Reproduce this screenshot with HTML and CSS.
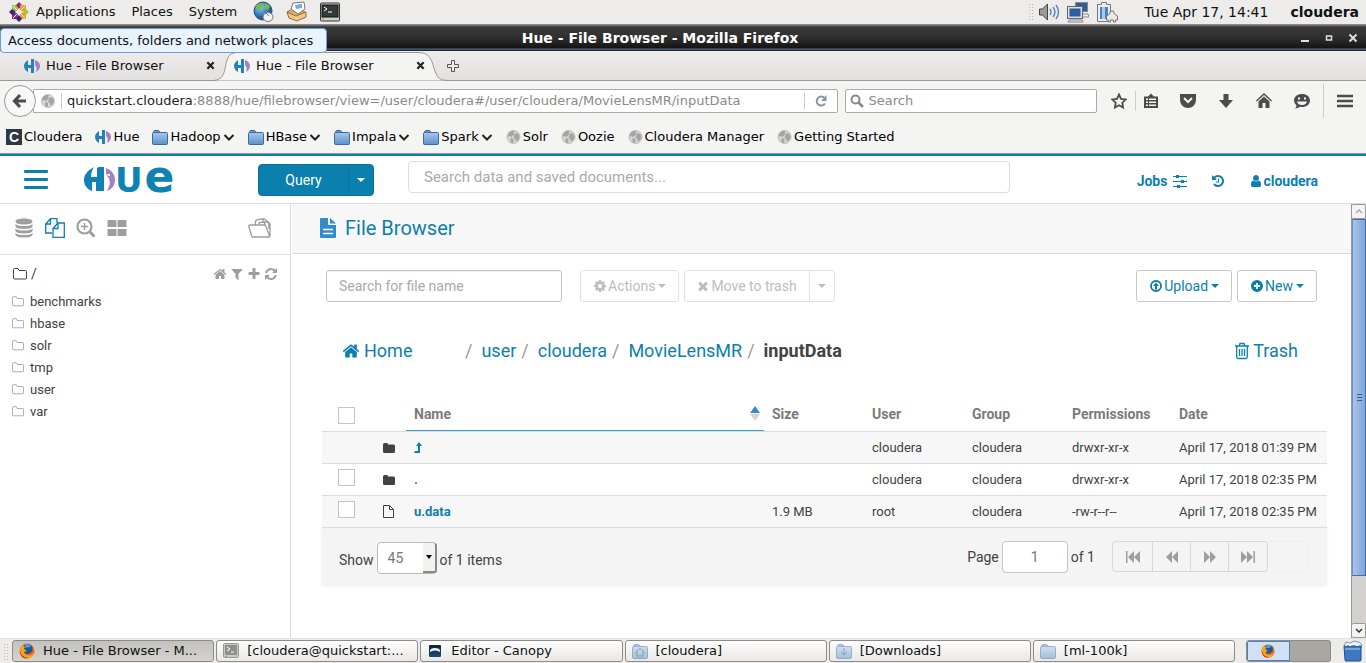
FILE: index.html
```html
<!DOCTYPE html>
<html lang="en">
<head>
<meta charset="utf-8">
<title>Hue - File Browser</title>
<link rel="stylesheet" href="styles.css">
</head>
<body>
<svg class="sprite" aria-hidden="true">
  <defs>
    <linearGradient id="folder-blue" x1="0" y1="0" x2="0" y2="1"><stop offset="0" stop-color="#a9c7ea"/><stop offset="1" stop-color="#5f90c9"/></linearGradient>
    <radialGradient id="globe-blue" cx=".35" cy=".3" r=".8"><stop offset="0" stop-color="#8fd0f0"/><stop offset=".6" stop-color="#2a6fb5"/><stop offset="1" stop-color="#153a70"/></radialGradient>
    <linearGradient id="canopy-blue" x1="0" y1="0" x2="0" y2="1"><stop offset="0" stop-color="#0d2038"/><stop offset="1" stop-color="#1e4a78"/></linearGradient>
  </defs>
  <symbol id="home" viewBox="0 0 1792 1792"><path d="M1472 992v480q0 26-19 45t-45 19h-384v-384h-256v384h-384q-26 0-45-19t-19-45v-480q0-1 .5-3t.5-3l575-474 575 474q1 2 1 6zm223-69l-62 74q-8 9-21 11h-3q-13 0-21-7l-692-577-692 577q-12 8-24 7-13-2-21-11l-62-74q-8-10-7-23.5t11-21.5l719-599q32-26 76-26t76 26l244 204v-195q0-14 9-23t23-9h192q14 0 23 9t9 23v408l219 182q10 8 11 21.5t-7 23.5z"/></symbol>
  <symbol id="user" viewBox="0 0 1792 1792"><path d="M1536 1399q0 109-62.5 187t-150.5 78h-854q-88 0-150.5-78t-62.5-187q0-85 8.5-160.5t31.5-152 58.5-131 94-89 134.5-34.5q131 128 313 128t313-128q76 0 134.5 34.5t94 89 58.5 131 31.5 152 8.5 160.5zm-256-887q0 159-112.5 271.5t-271.5 112.5-271.5-112.5-112.5-271.5 112.5-271.5 271.5-112.5 271.5 112.5 112.5 271.5z"/></symbol>
  <symbol id="filter" viewBox="0 0 1792 1792"><path d="M1595 295q17 41-14 70l-493 493v742q0 42-39 59-13 5-25 5-27 0-45-19l-256-256q-19-19-19-45v-486l-493-493q-31-29-14-70 17-39 59-39h1280q42 0 59 39z"/></symbol>
  <symbol id="plus" viewBox="0 0 1792 1792"><path d="M1600 736v192q0 40-28 68t-68 28h-416v416q0 40-28 68t-68 28h-192q-40 0-68-28t-28-68v-416h-416q-40 0-68-28t-28-68v-192q0-40 28-68t68-28h416v-416q0-40 28-68t68-28h192q40 0 68 28t28 68v416h416q40 0 68 28t28 68z"/></symbol>
  <symbol id="refresh" viewBox="0 0 1792 1792"><path d="M1639 1056q0 5-1 7-64 268-268 434.5t-478 166.5q-146 0-282.5-55t-243.5-157l-129 129q-19 19-45 19t-45-19-19-45v-448q0-26 19-45t45-19h448q26 0 45 19t19 45-19 45l-137 137q71 66 161 102t187 36q134 0 250-65t186-179q11-17 53-117 8-23 30-23h192q13 0 22.5 9.5t9.5 22.5zm25-800v448q0 26-19 45t-45 19h-448q-26 0-45-19t-19-45 19-45l138-138q-148-137-349-137-134 0-250 65t-186 179q-11 17-53 117-8 23-30 23h-199q-13 0-22.5-9.5t-9.5-22.5v-7q65-268 270-434.5t480-166.5q146 0 284 55.5t245 156.5l130-129q19-19 45-19t45 19 19 45z"/></symbol>
  <symbol id="cog" viewBox="0 0 1792 1792"><path d="M1152 896q0-106-75-181t-181-75-181 75-75 181 75 181 181 75 181-75 75-181zm512-109v222q0 12-8 23t-20 13l-185 28q-19 54-39 91 35 50 107 138 10 12 10 25t-9 23q-27 37-99 108t-94 71q-12 0-26-9l-138-108q-44 23-91 38-16 136-29 186-7 28-36 28h-222q-14 0-24.5-8.5t-11.5-21.5l-28-184q-49-16-90-37l-141 107q-10 9-25 9-14 0-25-11-126-114-165-168-7-10-7-23 0-12 8-23 15-21 51-66.5t54-70.5q-27-50-41-99l-183-27q-13-2-21-12.5t-8-23.5v-222q0-12 8-23t19-13l186-28q14-46 39-92-40-57-107-138-10-12-10-24 0-10 9-23 26-36 98.5-107.5t94.5-71.5q13 0 26 10l138 107q44-23 91-38 16-136 29-186 7-28 36-28h222q14 0 24.5 8.5t11.5 21.5l28 184q49 16 90 37l142-107q9-9 24-9 13 0 25 10 129 119 165 170 7 8 7 22 0 12-8 23-15 21-51 66.5t-54 70.5q26 50 41 98l183 28q13 2 21 12.5t8 23.5z"/></symbol>
  <symbol id="times" viewBox="0 0 1792 1792"><path d="M1490 1322q0 40-28 68l-136 136q-28 28-68 28t-68-28l-294-294-294 294q-28 28-68 28t-68-28l-136-136q-28-28-28-68t28-68l294-294-294-294q-28-28-28-68t28-68l136-136q28-28 68-28t68 28l294 294 294-294q28-28 68-28t68 28l136 136q28 28 28 68t-28 68l-294 294 294 294q28 28 28 68z"/></symbol>
  <symbol id="history" viewBox="0 0 1792 1792"><path d="M1664 896q0 156-61 298t-164 245-245 164-298 61q-172 0-327-72.5t-264-204.5q-7-10-6.5-22.5t8.5-20.5l137-138q10-9 25-9 16 2 23 12 73 95 179 147t225 52q104 0 198.5-40.5t163.5-109.5 109.5-163.5 40.5-198.5-40.5-198.5-109.5-163.5-163.5-109.5-198.5-40.5q-98 0-188 35.5t-160 101.5l137 138q31 30 14 69-17 40-59 40h-448q-26 0-45-19t-19-45v-448q0-42 40-59 39-17 69 14l130 129q107-101 244.5-156.5t284.5-55.5q156 0 298 61t245 164 164 245 61 298zm-640-288v448q0 14-9 23t-23 9h-320q-14 0-23-9t-9-23v-64q0-14 9-23t23-9h224v-352q0-14 9-23t23-9h64q14 0 23 9t9 23z"/></symbol>
  <symbol id="caret" viewBox="0 0 8 4"><path d="M0 0H8L4 4Z"/></symbol>
  <symbol id="hue" viewBox="0 0 31 25"><path fill="#0f81b3" d="M10 0C3 4 0 8 0 13c0 5 3 9 8 11V15h4v9h8V0h-5l-2 1v9H7C7 6 8 3 10 0Z"/><path fill="#a580c4" d="M22 1c6 2 9 7 9 12s-3 9-8 11c3-6 4-9 1-14-2-2-2-4-2-9Z"/><path fill="#fff" d="M23 7h3v2h-2z"/></symbol>
  <symbol id="hue-fav" viewBox="0 0 16 14"><path fill="#2580bf" d="M4 1C1 3 0 5 0 7c0 3 2 5 4 6V9h3v5h3V0H7v6H4Z"/><path fill="#a580c4" d="M11 1c3 1 5 3 5 6s-2 5-4 6c1-3 1-5-1-7Z"/></symbol>
  <symbol id="globe" viewBox="0 0 14 14"><circle cx="7" cy="7" r="6.500" fill="#d6d6d6" stroke="#bdbdbd"/><path fill="#a4a4a4" d="M2 3l3-2 3 0-1 2 1 1-3 3-2-1-2 1zM9 3l3 1 1 4-2 3-2 0 0-2-2-1 1-3zM4 8l3 1 0 3-1 1-2-1z"/></symbol>
  <symbol id="folder" viewBox="0 0 16 16"><path fill="#6b98cf" stroke="#3866a0" d="M1.500 3V2.500l1-1h4l1 1V4H1.500z"/><rect x=".5" y="3.500" width="15" height="12" rx="1" fill="url(#folder-blue)" stroke="#3b6aa5"/></symbol>
  <symbol id="chev" viewBox="0 0 12 7"><path d="M1.500 1L6 5.500 10.500 1" fill="none" stroke="#222" stroke-width="2"/></symbol>
  <symbol id="folder-line" viewBox="0 0 14 12"><path fill="none" stroke="currentColor" d="M.5 10V1.500a1 1 0 0 1 1-1H5l1 2h6.500a1 1 0 0 1 1 1V10a1 1 0 0 1-1 1h-11a1 1 0 0 1-1-1z"/></symbol>
  <symbol id="folder-solid" viewBox="0 0 12 10"><path d="M0 8.500v-7Q0 0 1.500 0H4q1 0 1 1.500h5.500Q12 1.500 12 3v5.500Q12 10 10.500 10h-9Q0 10 0 8.500z"/></symbol>
  <symbol id="firefox" viewBox="0 0 16 16"><circle cx="8" cy="8" r="7.500" fill="#e8671b"/><circle cx="8.500" cy="6" r="5" fill="#23539b"/><path fill="#48a0d8" d="M6 1.500q4-2 6 2l-3 1-3 0z"/><path fill="#f7a51c" d="M1 4q-1 10 7 11.500 6 0 7.500-7-2 4-6 4Q5 12 5 9l3-1-3-2 1-2-3-2z"/><path fill="#cf3a16" d="M1 6q0 8 8 9-6 2-8-5z"/></symbol>
</svg>

<header class="panel">
  <nav class="panel-menu">
    <svg class="i22" viewBox="0 0 22 22"><path fill="#a4c93b" d="M4 4h6v6H4z"/><path fill="#9b2574" d="M11 1l3 3-3 4-3-4z"/><path fill="#ed9f2d" d="M12 4h6v6h-6z"/><path fill="#9b2574" d="M4 12h6v6H4z"/><path fill="#2c2a7c" d="M1 11l3-3 4 3-4 3z"/><path fill="#a4c93b" d="M18 8l3 3-3 3-4-3z"/><path fill="#ed9f2d" d="M12 12h6v6h-6z"/><path fill="#2c2a7c" d="M11 14l3 4-3 3-3-3z"/><path stroke="#edecea" d="M5 5l12 12M17 5L5 17"/></svg>
    <button>Applications</button><button>Places</button><button>System</button>
    <svg class="i22" viewBox="0 0 22 22"><circle cx="10" cy="10" r="9" fill="url(#globe-blue)" stroke="#284e7d"/><path fill="#78bb42" d="M3 5q4-4 7-2l-2 5-3 2zM12 2l5 3-2 4-4-2z"/><ellipse cx="15" cy="16" rx="5" ry="4.500" fill="#f2f2f0" stroke="#777"/><path stroke="#777" d="M13 12l3 3"/></svg>
    <svg class="i22 mail" viewBox="0 0 22 22"><path fill="#e0ad69" stroke="#9b6b2e" d="M1 11L10 6l9 5-9 8z"/><path fill="#fff" stroke="#777" d="M7 2l11-1 1 7-7 5-7-5z"/><path fill="#75acd4" d="M9 4l7-1 0 4-6 1z"/><path fill="#efc88e" stroke="#9b6b2e" d="M1 11l9 4 10-4 0 5-9 4-8-3z"/></svg>
    <svg class="i22 term" viewBox="0 0 22 22"><rect x="1.500" y="2" width="19" height="18" rx="1" fill="#d0d0ca" stroke="#333"/><rect x="3" y="4" width="16" height="12" fill="#333a39" stroke="#111"/><path d="M5 6l3 2-3 2M9 11h4" fill="none" stroke="#fff"/><path stroke="#73d216" d="M3 17.500h2"/></svg>
  </nav>
  <div class="panel-status">
    <span class="grip"></span>
    <svg class="i22" viewBox="0 0 22 22"><path fill="#9a9c97" stroke="#444" d="M1.500 8h3l5-5v16l-5-5h-3z"/><path fill="none" stroke="#5584c4" stroke-width="1.400" d="M12 8q2 3 0 6M15 6q4 5 0 10M18 4q5 7 0 14"/></svg>
    <svg class="i22 net" viewBox="0 0 22 22"><rect x="8.500" y="1.500" width="12" height="9" fill="#2e5d9e" stroke="#888"/><path fill="#eee" stroke="#888" d="M14 13h7l1 3h-7z"/><rect x="1.500" y="6.500" width="13" height="10" fill="#2e5d9e" stroke="#ddd" stroke-width="2"/><rect x=".5" y="5.500" width="15" height="12" fill="none" stroke="#666"/><path fill="#eee" stroke="#888" d="M2 19h13l1 2H1z"/></svg>
    <svg class="i22" viewBox="0 0 22 22"><path fill="#eee" stroke="#777" d="M1.500 3.500h4v-2h5v2h4v17h-13z"/><path fill="#4a7fc0" d="M4 6h8v12H4z"/><path fill="#a9c8eb" d="M6 6h3v12H6z"/><path fill="#e8e8e6" stroke="#777" d="M10.500 15l3-2 1-3h3l1 3 3 2v4h-2v2h-2v-2h-3v2h-2v-2h-2z"/></svg>
    <time>Tue Apr 17, 14:41</time><b>cloudera</b>
  </div>
</header>
<div class="tip" role="tooltip">Access documents, folders and network places</div>

<div class="titlebar">
  <h1>Hue - File Browser - Mozilla Firefox</h1>
  <div class="winbtns">
    <button aria-label="Minimize"><svg viewBox="0 0 10 10"><path d="M1 8h8" stroke-width="2"/></svg></button>
    <button aria-label="Maximize"><svg viewBox="0 0 10 10"><path d="M2.500 3h5v4h-5z" stroke-width="1.500"/></svg></button>
    <button aria-label="Close"><svg viewBox="0 0 10 10"><path d="M1.500 1.500l7 7m0-7l-7 7" stroke-width="2"/></svg></button>
  </div>
</div>

<div class="tabs">
  <div class="tab"><svg class="fav"><use href="#hue-fav"/></svg><span>Hue - File Browser</span><button aria-label="Close tab"><svg viewBox="0 0 10 10"><path d="M1.500 1.500l7 7m0-7l-7 7"/></svg></button></div>
  <div class="tab active"><svg class="tabshape" viewBox="0 0 234 30" preserveAspectRatio="none"><path fill="#f4f4f2" stroke="#999" d="M0 29.500Q9 29 11 18C13 7 14 1.500 24 1.500H204C215 1.500 217 7 220 17C223 27 225 29 234 29.500"/></svg><svg class="fav"><use href="#hue-fav"/></svg><span>Hue - File Browser</span><button aria-label="Close tab"><svg viewBox="0 0 10 10"><path d="M1.500 1.500l7 7m0-7l-7 7"/></svg></button></div>
  <button class="newtab" aria-label="New tab"><svg viewBox="0 0 14 14"><path d="M5.500 1.500h3v4h4v3h-4v4h-3v-4h-4v-3h4z"/></svg></button>
</div>

<div class="navbar">
  <button class="back" aria-label="Back"><svg viewBox="0 0 16 16"><path d="M14 8H4M8 2L2.500 8 8 14" fill="none" stroke="#4c4c4c" stroke-width="3.200"/></svg></button>
  <div class="urlbar">
    <svg class="i14"><use href="#globe"/></svg>
    <div class="url" role="textbox" aria-label="Address">quickstart.cloudera<span>:8888/hue/filebrowser/view=/user/cloudera#/user/cloudera/MovieLensMR/inputData</span></div>
    <button aria-label="Reload"><svg class="i14" viewBox="0 0 14 14"><path d="M11 9.500A4.500 4.500 0 1 1 10.500 4" fill="none" stroke="#8496a6" stroke-width="2"/><path fill="#8496a6" d="M12.500 1v6H7z"/></svg></button>
  </div>
  <label class="find"><svg class="i14" viewBox="0 0 14 14"><circle cx="5.500" cy="5.500" r="4" fill="none" stroke="#888" stroke-width="2"/><path stroke="#888" stroke-width="2.500" d="M8.500 8.500l4.500 4.500"/></svg><input type="text" placeholder="Search" aria-label="Web search"></label>
  <div class="tools">
    <button aria-label="Bookmark"><svg viewBox="0 0 16 16"><path fill="none" stroke="#4c4c4c" stroke-width="1.800" d="M8 1.500l2 4.300 4.700.6-3.400 3.300.8 4.800L8 12.200l-4.100 2.300.8-4.800L1.300 6.400 6 5.800z"/></svg></button>
    <button class="split" aria-label="Bookmarks list"><svg viewBox="0 0 16 16"><path fill="#4c4c4c" d="M1 3.500h4L8 .5l3 3h4V15H1z"/><path fill="#f4f4f2" d="M3 5.500h2V7H3zM6 5.500h7V7H6zM3 8.500h2V10H3zM6 8.500h7V10H6zM3 11.500h2V13H3zM6 11.500h7V13H6z"/></svg></button>
    <button aria-label="Pocket"><svg viewBox="0 0 16 16"><path fill="#4c4c4c" d="M0 1h16v6a8 8 0 0 1-16 0z"/><path fill="none" stroke="#f4f4f4" stroke-width="2" d="M4 5l4 4 4-4"/></svg></button>
    <button aria-label="Downloads"><svg viewBox="0 0 16 16"><path fill="#4c4c4c" d="M5.500 1h5v6H15l-7 8-7-8h4.500z"/></svg></button>
    <button aria-label="Home"><svg viewBox="0 0 16 16"><path fill="#4c4c4c" d="M8 0l8 7.500-1 1-7-6.500-7 6.500-1-1zM8 3.500l5.500 5V15H9.500v-5h-3v5h-4V8.500z"/></svg></button>
    <button aria-label="Chat"><svg viewBox="0 0 16 16"><path fill="#4c4c4c" d="M8 1c4.500 0 8 2.700 8 6.500S12.500 14 8 14q-1 0-2-.3Q4 15.500 1 15.500q1.500-1.500 1.500-3Q0 10.500 0 7.500C0 3.700 3.500 1 8 1z"/><path fill="#f4f4f4" d="M4 4.500h2v2H4zM10 4.500h2v2h-2zM3 8.500h10q-1 3.500-5 3.500T3 8.500z"/></svg></button>
    <button class="menu" aria-label="Menu"><svg viewBox="0 0 16 16"><path stroke="#4c4c4c" stroke-width="2.400" d="M0 3h16M0 8h16M0 13h16"/></svg></button>
  </div>
</div>

<nav class="bookmarks">
  <a href="#"><i class="cicon">C</i>Cloudera</a>
  <a href="#"><svg class="i16"><use href="#hue-fav"/></svg>Hue</a>
  <a href="#"><svg class="i16"><use href="#folder"/></svg>Hadoop<svg class="chev"><use href="#chev"/></svg></a>
  <a href="#"><svg class="i16"><use href="#folder"/></svg>HBase<svg class="chev"><use href="#chev"/></svg></a>
  <a href="#"><svg class="i16"><use href="#folder"/></svg>Impala<svg class="chev"><use href="#chev"/></svg></a>
  <a href="#"><svg class="i16"><use href="#folder"/></svg>Spark<svg class="chev"><use href="#chev"/></svg></a>
  <a href="#"><svg class="site"><use href="#globe"/></svg>Solr</a>
  <a href="#"><svg class="site"><use href="#globe"/></svg>Oozie</a>
  <a href="#"><svg class="site"><use href="#globe"/></svg>Cloudera Manager</a>
  <a href="#"><svg class="site"><use href="#globe"/></svg>Getting Started</a>
</nav>

<div class="topnav">
  <button class="burger" aria-label="Menu"><span></span><span></span><span></span></button>
  <a class="logo" href="#" aria-label="Hue"><svg class="mark"><use href="#hue"/></svg><span class="u">U</span><span class="e">e</span></a>
  <div class="query"><button>Query</button><button aria-label="Query types"><svg class="caret"><use href="#caret"/></svg></button></div>
  <input class="search" type="text" placeholder="Search data and saved documents..." aria-label="Search data and saved documents">
  <nav class="usernav">
    <a href="#">Jobs <svg class="i14 sliders" viewBox="0 0 14 14"><path stroke="currentColor" d="M0 2.500h14M0 7.500h14M0 12.500h14"/><path d="M3 1h3v3H3zM8 6h3v3H8zM4 11h3v3H4z"/></svg></a>
    <a href="#" aria-label="History"><svg class="i14"><use href="#history"/></svg></a>
    <a href="#"><svg class="i14"><use href="#user"/></svg>cloudera</a>
  </nav>
</div>

<div class="app">
  <aside>
    <div class="assist">
      <button aria-label="Databases"><svg class="i20" viewBox="0 0 20 20"><path d="M1.500 3.500C1.500 1.500 5 .5 10 .5s8.500 1 8.500 3S15 6.500 10 6.500 1.500 5.500 1.500 3.500zM1.500 6q2 2 8.500 2t8.500-2v2.500q-1 2.500-8.500 2.500T1.500 8.500zM1.500 10.500q2 2 8.500 2t8.500-2V13q-1 2.500-8.500 2.500T1.500 13zM1.500 15q2 2 8.500 2t8.500-2v2q-1 2.500-8.500 2.500T1.500 17z"/></svg></button>
      <button class="on" aria-label="Files"><svg class="i20" viewBox="0 0 20 20"><path fill="none" stroke="currentColor" stroke-width="1.300" d="M7 15H.7V6L5.500.7H12V5M5.500.7V6H.7M8.500 19.300h10.800V5H13L8 10.500v8.800zM13 5v5.500H8"/></svg></button>
      <button aria-label="Documents"><svg class="i20" viewBox="0 0 20 20"><circle cx="8.500" cy="8.500" r="7" fill="none" stroke="currentColor" stroke-width="2.200"/><path stroke="currentColor" stroke-width="3" d="M13.500 13.500l5 5"/><path stroke="currentColor" stroke-width="1.600" d="M8.500 5v7M5 8.500h7"/></svg></button>
      <button aria-label="Dashboards"><svg class="i20" viewBox="0 0 20 20"><path d="M1.500 2h7q1 0 1 1v6h-9V3q0-1 1-1zM11.500 2h7q1 0 1 1v6h-9V3q0-1 1-1zM.5 11h9v7h-8q-1 0-1-1zM10.500 11h9v6q0 1-1 1h-8z"/></svg></button>
      <button class="open" aria-label="Collapse documents"><svg viewBox="0 0 23 20"><path fill="none" stroke="currentColor" stroke-width="1.300" d="M4 19L.8 8.500Q.5 7 2 7h4.500M4 19h17q1 0 1-1V6q0-1-1.500-1M2 7h14.500q1 0 1.500 1.500L21.500 18M7 7l1-5 8-1.300L20.500 4l.5 7M11 7V4.500l5-.5 2 4.500M15 1l.5 3h5"/></svg></button>
    </div>
    <div class="crumb"><svg class="f1"><use href="#folder-line"/></svg><span>/</span>
      <div class="acts"><button aria-label="Home"><svg class="i14"><use href="#home"/></svg></button><button aria-label="Filter"><svg class="i14"><use href="#filter"/></svg></button><button aria-label="Add"><svg class="i14"><use href="#plus"/></svg></button><button aria-label="Refresh"><svg class="i14"><use href="#refresh"/></svg></button></div>
    </div>
    <ul class="tree">
      <li><a href="#"><svg><use href="#folder-line"/></svg>benchmarks</a></li>
      <li><a href="#"><svg><use href="#folder-line"/></svg>hbase</a></li>
      <li><a href="#"><svg><use href="#folder-line"/></svg>solr</a></li>
      <li><a href="#"><svg><use href="#folder-line"/></svg>tmp</a></li>
      <li><a href="#"><svg><use href="#folder-line"/></svg>user</a></li>
      <li><a href="#"><svg><use href="#folder-line"/></svg>var</a></li>
    </ul>
  </aside>

  <main>
    <h2><svg viewBox="0 0 16 20"><path fill="#338bc7" d="M0 1q0-1 1-1h7v6q0 1 1 1h7v12q0 1-1 1H1q-1 0-1-1zM10 0l6 5.500h-6z"/><path stroke="#fff" stroke-width="1.400" d="M3 11.500h10M3 15.500h10"/></svg>File Browser</h2>
    <div class="content">
      <div class="filters">
        <input type="text" placeholder="Search for file name" aria-label="Search for file name">
        <button class="btn" disabled><svg class="i14"><use href="#cog"/></svg>Actions<svg class="caret"><use href="#caret"/></svg></button>
        <div class="group"><button class="btn" disabled><svg class="i14"><use href="#times"/></svg>Move to trash</button><button class="btn" disabled aria-label="More"><svg class="caret"><use href="#caret"/></svg></button></div>
        <div class="right">
          <button class="btn"><svg class="i14" viewBox="0 0 14 14"><circle cx="7" cy="7" r="5" fill="none" stroke="currentColor" stroke-width="1.800"/><path d="M7 3.500L10 7H8v3.500H6V7H4z"/></svg>Upload<svg class="caret"><use href="#caret"/></svg></button>
          <button class="btn"><svg class="i14" viewBox="0 0 14 14"><path fill-rule="evenodd" d="M7 1a6 6 0 1 1 0 12A6 6 0 0 1 7 1zM6 4v2H4v2h2v2h2V8h2V6H8V4z"/></svg>New<svg class="caret"><use href="#caret"/></svg></button>
        </div>
      </div>
      <div class="path">
        <a class="homelink" href="#"><svg><use href="#home"/></svg>Home</a>
        <ol><li><a href="#">user</a></li><li><a href="#">cloudera</a></li><li><a href="#">MovieLensMR</a></li><li><b>inputData</b></li></ol>
        <a class="trash" href="#"><svg viewBox="0 0 16 18"><path fill="none" stroke="currentColor" stroke-width="1.300" d="M1 4h14M5 4l1-2.500h4L11 4M2.700 4v11q0 1.500 1.500 1.500h7.600q1.500 0 1.500-1.500V4M5.500 7v7M8 7v7M10.500 7v7"/></svg>Trash</a>
      </div>
      <table>
        <colgroup><col class="c-check"><col class="c-icon"><col><col class="c-size"><col class="c-size"><col class="c-size"><col class="c-perm"><col class="c-date"></colgroup>
        <thead><tr><th><input type="checkbox" aria-label="Select all"></th><th></th><th class="sorted"><div>Name<svg viewBox="0 0 10 16"><path fill="#338bc7" d="M5 0l5 7H0z"/><path fill="#d4d4d4" d="M0 8h10l-5 7z"/></svg></div></th><th>Size</th><th>User</th><th>Group</th><th>Permissions</th><th>Date</th></tr></thead>
        <tbody>
          <tr><td></td><td><svg class="fs"><use href="#folder-solid"/></svg></td><td><a href="#" aria-label="Parent folder"><svg class="up" viewBox="0 0 8 11"><path d="M5 0l3 4H6v7H0l1-2h3V4H2z"/></svg></a></td><td></td><td>cloudera</td><td>cloudera</td><td>drwxr-xr-x</td><td>April 17, 2018 01:39 PM</td></tr>
          <tr><td><input type="checkbox" aria-label="Select current folder"></td><td><svg class="fs"><use href="#folder-solid"/></svg></td><td><a href="#">.</a></td><td></td><td>cloudera</td><td>cloudera</td><td>drwxr-xr-x</td><td>April 17, 2018 02:35 PM</td></tr>
          <tr><td><input type="checkbox" aria-label="Select u.data"></td><td><svg class="fo" viewBox="0 0 11 13"><path fill="none" stroke="currentColor" d="M.5.500h6l4 4v8H.5zM6.500.500v4h4"/></svg></td><td><a href="#">u.data</a></td><td>1.9 MB</td><td>root</td><td>cloudera</td><td>-rw-r--r--</td><td>April 17, 2018 02:35 PM</td></tr>
        </tbody>
      </table>
      <div class="pager">
        <label for="per">Show</label>
        <span class="selbox"><select id="per"><option>45</option></select><span class="selarrow"><svg viewBox="0 0 6 4"><path d="M0 0h6L3 4z"/></svg></span></span>
        <span>of 1 items</span>
        <div class="pages">
          <label for="pg">Page</label><input id="pg" type="text" value="1"><span>of 1</span>
          <div class="pagebtns">
            <button aria-label="First page"><svg viewBox="0 0 16 12"><path d="M1 0h1.500v12H1zM9 0v12L3 6zM15 0v12L9 6z"/></svg></button>
            <button aria-label="Previous page"><svg viewBox="0 0 16 12"><path d="M8 0v12L2 6zM14 0v12L8 6z"/></svg></button>
            <button aria-label="Next page"><svg viewBox="0 0 16 12"><path d="M2 0v12l6-6zM8 0v12l6-6z"/></svg></button>
            <button aria-label="Last page"><svg viewBox="0 0 16 12"><path d="M1 0v12l6-6zM7 0v12l6-6zM13.500 0H15v12h-1.500z"/></svg></button>
          </div>
        </div>
      </div>
    </div>
  </main>
  <div class="scroll">
    <button aria-label="Scroll up"><svg viewBox="0 0 8 5"><path d="M1 4l3-3 3 3" stroke="#aaa"/></svg></button>
    <div class="thumb"><span></span></div>
    <div class="trough"></div>
    <button aria-label="Scroll down"><svg viewBox="0 0 8 5"><path d="M1 1l3 3 3-3" stroke="#333"/></svg></button>
  </div>
</div>

<footer class="taskbar">
  <span class="grip"></span>
  <div class="tasks">
    <button class="cur"><svg class="i16"><use href="#firefox"/></svg><span>Hue - File Browser - M...</span></button>
    <button><svg class="i16" viewBox="0 0 16 16"><rect x=".5" y=".5" width="15" height="14" rx="1" fill="#c9c9c6" stroke="#999"/><rect x="2" y="2" width="12" height="10" fill="#8d918f"/><path d="M4 4l3 2-3 2M8 9h3" fill="none" stroke="#fff"/><path stroke="#73d216" d="M2 13.500h2"/></svg><span>[cloudera@quickstart:...</span></button>
    <button><svg class="i16" viewBox="0 0 16 16"><rect x="2" y="2" width="12" height="12" rx="1" fill="url(#canopy-blue)"/><path fill="#eef3f7" d="M3 8q0-3 5-3t5 3v1q-2-1.500-5-1.500T3 9z"/></svg><span>Editor - Canopy</span></button>
    <button><span class="pale"><svg class="i16"><use href="#folder"/></svg><svg class="over" viewBox="0 0 16 16"><path d="M3 9.500L8 5.500l5 4M5 9v4h6V9"/></svg></span><span>[cloudera]</span></button>
    <button><span class="pale"><svg class="i16"><use href="#folder"/></svg><svg class="over" viewBox="0 0 16 16"><path d="M8 5v7M5 9l3 3 3-3"/></svg></span><span>[Downloads]</span></button>
    <button><span class="pale"><svg class="i16"><use href="#folder"/></svg></span><span>[ml-100k]</span></button>
  </div>
  <div class="spaces"><button aria-label="Workspace 1"><svg class="i14"><use href="#firefox"/></svg></button><button aria-label="Workspace 2"></button></div>
  <svg class="bin" viewBox="0 0 22 22"><path fill="#e8eff5" stroke="#8a98a5" d="M2 6l2-4 4 1 4-2 5 1 3 3-1 3z"/><path fill="#3f78c0" stroke="#1f4d8c" d="M2 6h17v14q0 1-1 1H4q-1 0-1-1z"/><path fill="#76a6de" d="M3 8h15v2H3z"/><path fill="none" stroke="#fff" d="M3 6l3-2 2 2 4-3 3 3 3-2"/></svg>
</footer>
</body>
</html>
```

FILE: styles.css
```css
* { box-sizing: border-box; }
body { margin: 0; min-height: 100vh; display: flex; flex-direction: column; background: #fff; font: 13px/16px "DejaVu Sans", sans-serif; color: #111; position: relative; }
button { font: inherit; color: inherit; background: none; border: 0; padding: 0; margin: 0; display: flex; align-items: center; justify-content: center; }
a { color: inherit; text-decoration: none; }
svg { display: block; flex: none; fill: currentColor; }
h1, h2, ul, ol { margin: 0; padding: 0; list-style: none; }
.sprite { position: absolute; width: 0; height: 0; }
.i22 { width: 22px; height: 22px; }
.i20 { width: 20px; height: 20px; }
.i16 { width: 16px; height: 16px; }
.i14 { width: 14px; height: 14px; }
.caret { width: 8px; height: 4px; }
.grip { width: 5px; height: 17px; background: radial-gradient(circle, #999 0 1px, transparent 1px) 0 0 / 3px 3px; opacity: .6; }

.panel { height: 25px; display: flex; justify-content: space-between; background: #edecea; border-bottom: 1px solid #8f8e8a; }
.panel-menu, .panel-status { display: flex; align-items: center; padding-bottom: 1px; }
.panel-menu { padding-left: 8px; }
.panel-menu button { margin-right: 16px; }
.panel-menu .i22:first-child { margin-right: 6px; }
.panel-menu .mail, .panel-menu .term { margin-left: 11px; }
.panel-status { padding-right: 7px; font-size: 14px; }
.panel-status .grip { margin-right: 5px; }
.panel-status .net { margin: 0 7px; }
.panel-status time { margin-left: 26px; }
.panel-status b { margin-left: 22px; }
.tip { position: absolute; z-index: 2; left: 0; top: 28px; height: 25px; min-width: 327px; padding: 0 7px; border: 1px solid #6f9bd6; border-radius: 4px; background: #e8f3fe; line-height: 23px; }

.titlebar { height: 26px; display: flex; align-items: center; background: linear-gradient(#777 0, #3a3a3a 2px, #303030 12px, #151515 23px, #536b8b 24px, #111 26px); color: #fff; padding: 0 8px 0 20px; }
.titlebar h1 { flex: 1; text-align: center; font-size: 14px; line-height: 16px; }
.winbtns { display: flex; gap: 14px; }
.winbtns svg { width: 10px; height: 10px; fill: none; stroke: #ddd; }

.tabs { height: 30px; display: flex; align-items: center; padding-left: 14px; background: linear-gradient(#edecea, #e2e1df); border-bottom: 1px solid #999; }
.tab { position: relative; display: flex; align-items: center; width: 210px; height: 30px; padding: 0 9px 0 10px; gap: 6px; }
.tab > * { position: relative; }
.tab span { flex: 1; }
.tab button svg { width: 9px; height: 9px; stroke: #222; stroke-width: 2.400; }
.fav { width: 16px; height: 14px; }
.tab .tabshape { position: absolute; left: -10px; top: 0; width: 234px; height: 30px; }
.newtab { margin-left: 12px; position: relative; }
.newtab svg { width: 14px; height: 14px; fill: #eee; stroke: #555; }

.navbar { height: 40px; display: flex; align-items: center; background: #f4f4f2; padding-left: 4px; }
.back { width: 32px; height: 32px; border: 1px solid #999; border-radius: 50%; background: #f8f8f8; position: relative; }
.back svg { width: 16px; height: 16px; }
.urlbar { flex: 807; height: 24px; margin-left: -3px; display: flex; align-items: center; background: #fff; border: 1px solid #aaa; border-radius: 0 2px 2px 0; padding-left: 7px; }
.url { flex: 1; margin-left: 6px; padding-left: 5px; border-left: 1px solid #ccc; white-space: nowrap; overflow: hidden; color: #222; }
.url span { color: #8a8a8a; }
.urlbar button { height: 16px; width: 33px; border-left: 1px solid #ccc; }
.find { flex: 250; height: 24px; margin-left: 7px; display: flex; align-items: center; gap: 5px; padding-left: 4px; background: #fff; border: 1px solid #aaa; border-radius: 2px; }
.find input { flex: 1; min-width: 0; border: 0; padding: 0; background: none; font: inherit; outline: 0; }
.find input::placeholder { color: #8a8a8a; }
.tools { display: flex; align-items: center; padding: 0 12px 0 14px; }
.tools button { width: 38px; height: 20px; }
.tools button:first-child { width: 24px; padding-right: 8px; }
.tools svg { width: 16px; height: 16px; }
.tools .split { width: 34px; border-left: 1px solid #ccc; padding-right: 4px; }
.tools .menu { height: 34px; width: 31px; margin-left: 2px; border-left: 1px solid #ccc; padding-left: 12px; }

.bookmarks { height: 33px; display: flex; align-items: center; padding: 0 6px; gap: 13px; background: #f4f4f2; border-bottom: 1px solid #999; }
.bookmarks a { display: flex; align-items: center; gap: 2px; color: #000; white-space: nowrap; }
.chev { width: 12px; height: 7px; }
.site { width: 15px; height: 14px; }
.cicon { width: 16px; height: 16px; background: #2d3841; color: #fff; font: bold 14px/16px "Liberation Sans", sans-serif; text-align: center; }

.topnav { height: 50px; display: flex; align-items: center; background: #fff; border-top: 2px solid #0b7fad; border-bottom: 1px solid #dcdcdc; font: 14px/20px Roboto, sans-serif; padding: 0 48px 0 24px; }
.burger { width: 24px; flex-direction: column; gap: 5px; }
.burger span { width: 24px; height: 3px; border-radius: 1px; background: #0b7fad; }
.logo { width: 98px; margin-left: 36px; display: flex; align-items: baseline; padding-bottom: 3px; color: #0f81b3; font-family: "DejaVu Sans", sans-serif; font-weight: bold; line-height: 25px; }
.mark { width: 31px; height: 25px; }
.logo .u { font-size: 34px; line-height: 25px; }
.logo .e { font-size: 44px; line-height: 25px; margin-left: 2px; }
.query { display: flex; height: 32px; margin-left: 76px; color: #fff; }
.query button { background: #0b7fad; width: 91px; border: 1px solid #0a729c; border-radius: 4px 0 0 4px; }
.query button + button { width: 26px; margin-left: -1px; border-radius: 0 4px 4px 0; }
.search { flex: 1; max-width: 602px; height: 32px; margin: 0 100px 6px 34px; border: 1px solid #dcdcdc; border-radius: 4px; padding: 0 15px; font: 15px/20px Roboto, sans-serif; outline: 0; }
.search::placeholder { color: #aaa; }
.usernav { display: flex; color: #0b7fad; font-weight: bold; gap: 24px; margin-left: auto; padding-top: 2px; }
.usernav a { display: flex; align-items: center; }
.usernav .sliders { margin: 0 0 0 6px; }

.app { flex: 1; display: flex; min-height: 0; background: #fff; font: 14px/20px Roboto, sans-serif; color: #424242; }
aside { width: 291px; flex: none; border-right: 1px solid #dcdcdc; }
.assist { height: 51px; display: flex; align-items: center; gap: 11px; padding: 0 19px 2px 14px; border-bottom: 1px solid #dcdcdc; color: #9e9e9e; }
.assist .on { color: #0b7fad; }
.assist .open { margin-left: auto; }
.open svg { width: 23px; height: 20px; }
.crumb { display: flex; align-items: center; height: 36px; padding: 2px 12px 0 13px; gap: 4px; }
.f1 { width: 14px; height: 12px; }
.acts { display: flex; gap: 3px; margin-left: auto; color: #9e9e9e; }
.tree { font-size: 13px; line-height: 22px; padding-left: 12px; }
.tree a { display: flex; align-items: center; gap: 6px; }
.tree svg { width: 12px; height: 11px; margin-bottom: 2px; color: #9e9e9e; }

main { flex: 1; min-width: 0; }
main h2 { height: 50px; display: flex; align-items: center; gap: 9px; padding: 0 0 2px 28px; margin-left: 1px; background: #f7f7f7; border-bottom: 1px solid #dcdcdc; color: #0b7fad; font-size: 20px; font-weight: normal; }
main h2 svg { width: 16px; height: 20px; }
.content { padding: 16px 24px 0 31px; }
.filters { display: flex; align-items: center; padding: 0 10px 0 4px; }
.filters input { width: 236px; height: 32px; border: 1px solid #c4c4c4; border-radius: 3px; padding: 0 12px; font: inherit; box-shadow: inset 0 1px 1px #eee; }
.filters input::placeholder { color: #aaa; }
.btn { height: 32px; padding: 0 12px; gap: 1px; border: 1px solid #c8c8c8; border-radius: 3px; background: #fff; color: #0b7fad; white-space: nowrap; }
.btn .caret { margin-left: 2px; }
.btn:disabled { color: #bdbdbd; border-color: #e2e2e2; }
.filters > .btn { margin-left: 18px; }
.group { display: flex; margin-left: 5px; }
.group .btn:first-child { border-radius: 3px 0 0 3px; padding: 0 12px 0 11px; }
.group .btn:last-child { border-radius: 0 3px 3px 0; margin-left: -1px; padding: 0 8px; }
.group .btn:last-child .caret { margin-left: 0; }
.right { display: flex; gap: 5px; margin-left: auto; }
.path { display: flex; align-items: center; height: 96px; padding: 2px 29px 0 20px; font-size: 18px; color: #0b7fad; }
.homelink, .trash { display: flex; align-items: center; gap: 4px; }
.homelink { width: 123px; }
.homelink svg { width: 18px; height: 18px; }
.path ol { display: flex; }
.path li::before { content: "/"; color: #999; padding-right: 9px; }
.path li { padding-right: 5px; }
.path b { color: #424242; }
.trash { margin-left: auto; gap: 3px; }
.trash svg { width: 16px; height: 18px; }

table { width: 100%; table-layout: fixed; border-collapse: collapse; font-size: 13px; line-height: 20px; }
.c-check { width: 53px; }
.c-icon { width: 31px; }
.c-size { width: 100px; }
.c-perm { width: 107px; }
.c-date { width: 156px; }
th { height: 33px; padding: 0 8px; text-align: left; font-size: 14px; color: #7a7a7a; }
td { height: 32px; padding: 1px 8px 0; border-top: 1px solid #dcdcdc; white-space: nowrap; }
td a { color: #0b7fad; font-weight: bold; }
tbody tr:nth-child(odd) { background: #f7f7f7; }
th:first-child, td:first-child { padding-left: 16px; }
.sorted { box-shadow: inset 0 -1px #2fa5da; }
.sorted div { display: flex; justify-content: space-between; align-items: center; margin-right: -4px; }
.sorted svg { width: 10px; height: 16px; }
input[type=checkbox] { appearance: none; display: block; width: 17px; height: 17px; margin: 2px 0 0; border: 1px solid #c4c4c4; background: #fff; }
td input[type=checkbox] { margin: 0 0 4px; }
.fs { width: 12px; height: 10px; }
.fo { width: 11px; height: 13px; }
.up { width: 8px; height: 11px; }

.pager { display: flex; align-items: center; height: 58px; gap: 3px; padding: 6px 18px 0 17px; border-top: 1px solid #dcdcdc; background: #f4f4f4; box-shadow: 0 1px 3px #eee; }
.selbox { position: relative; width: 60px; height: 32px; margin-bottom: 4px; }
.selbox select { appearance: none; width: 60px; height: 32px; border: 1px solid #bbb; border-radius: 4px; padding: 0 10px; background: #fff; font: inherit; color: #777; }
.selarrow { position: absolute; right: 0; top: 1px; width: 14px; height: 30px; display: flex; align-items: center; justify-content: center; background: #f2f2f0; border: solid #888; border-width: 0 2px 2px 0; border-radius: 0 3px 3px 0; pointer-events: none; }
.selarrow svg { width: 6px; height: 4px; fill: #000; }
.pages { display: flex; align-items: center; gap: 3px; margin: 0 0 6px auto; }
.pages input { width: 66px; height: 32px; border: 1px solid #c4c4c4; border-radius: 4px; background: #fff; text-align: center; font: inherit; color: #777; padding: 0; }
.pagebtns { display: flex; width: 197px; height: 31px; margin-left: 14px; border: 1px solid #efefef; border-radius: 4px; color: #9e9e9e; }
.pagebtns button { width: 39px; height: 31px; margin: -1px 0 0 -1px; border: 1px solid #d8d8d8; }
.pagebtns button:first-child { width: 41px; border-radius: 4px 0 0 4px; }
.pagebtns button:last-child { width: 40px; border-radius: 0 4px 4px 0; }
.pagebtns svg { width: 16px; height: 12px; }

.scroll { width: 15px; display: flex; flex-direction: column; background: #d4d2cf; border: solid #999; border-width: 0 0 0 1px; }
.scroll button { height: 15px; background: #f4f4f2; border: 1px solid #999; border-left: 0; border-radius: 2px; }
.scroll svg { width: 8px; height: 5px; fill: none; stroke-width: 1.500; }
.thumb { flex: 358; display: flex; align-items: center; justify-content: center; border: 1px solid #4a70a8; border-left-color: #6b90c4; background: linear-gradient(90deg, #a9c5e9, #7fa5d8); }
.thumb span { width: 5px; height: 7px; background: repeating-linear-gradient(#375f97 0 1px, transparent 1px 3px); }
.trough { flex: 47; }

.taskbar { height: 25px; display: flex; align-items: center; padding: 0 2px 0 3px; background: #edecea; border-top: 1px solid #e4e3e1; }
.tasks { flex: 1; display: grid; grid-template-columns: repeat(6, minmax(0, 1fr)); gap: 2px; margin-left: 4px; }
.tasks button { height: 22px; justify-content: flex-start; gap: 8px; padding: 0 6px; border: 1px solid #8d8c88; border-radius: 3px; background: linear-gradient(#fdfdfd, #e9e8e6); }
.tasks button.cur { background: linear-gradient(#c3c2bf, #d3d2cf); }
.tasks button > span:last-child { white-space: nowrap; }
.pale { position: relative; opacity: .5; }
.over { position: absolute; left: 0; top: 0; width: 16px; height: 16px; fill: none; stroke: #234d86; }
.spaces { display: flex; width: 85px; height: 22px; margin-left: 11px; border: 1px solid #8d8c88; border-radius: 3px; background: #aaa7a3; overflow: hidden; }
.spaces button { flex: 1; }
.spaces button:first-child { background: #cfe1f7; border: 1px solid #4f80bd; }
.bin { width: 22px; height: 22px; margin-left: 11px; }
```
